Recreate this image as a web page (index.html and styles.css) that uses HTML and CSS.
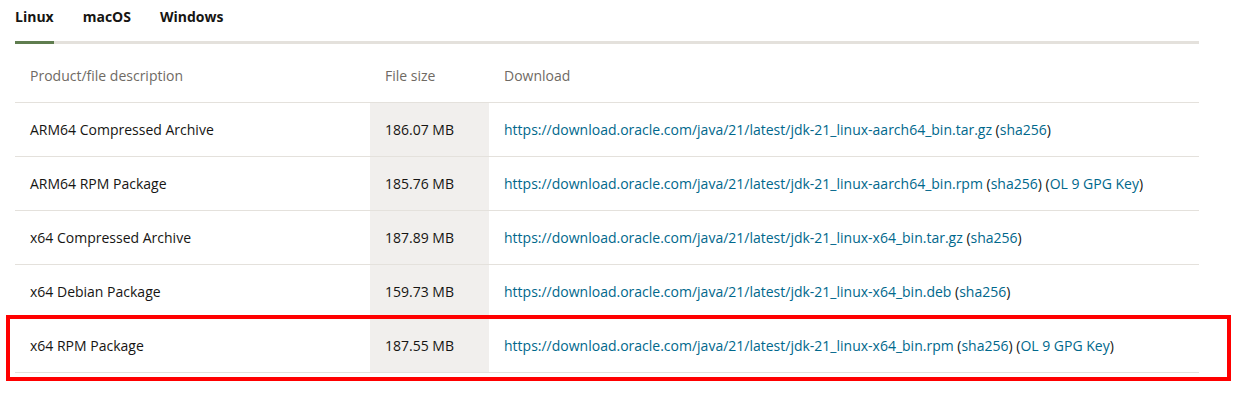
FILE: index.html
```html
<!DOCTYPE html>
<html lang="en">
<head>
<meta charset="utf-8">
<title>JDK 21 downloads</title>
<link rel="stylesheet" href="styles.css">
</head>
<body>
<div class="page">
  <nav class="tabs">
    <a class="tab active">Linux</a>
    <a class="tab">macOS</a>
    <a class="tab">Windows</a>
  </nav>
  <table class="files">
    <thead>
      <tr>
        <th class="c-desc">Product/file description</th>
        <th class="c-size">File size</th>
        <th class="c-dl">Download</th>
      </tr>
    </thead>
    <tbody>
      <tr>
        <td>ARM64 Compressed Archive</td>
        <td class="shade">186.07 MB</td>
        <td><a>https://download.oracle.com/java/21/latest/jdk-21_linux-aarch64_bin.tar.gz</a> (<a>sha256</a>)</td>
      </tr>
      <tr>
        <td>ARM64 RPM Package</td>
        <td class="shade">185.76 MB</td>
        <td><a>https://download.oracle.com/java/21/latest/jdk-21_linux-aarch64_bin.rpm</a> (<a>sha256</a>) (<a>OL 9 GPG Key</a>)</td>
      </tr>
      <tr>
        <td>x64 Compressed Archive</td>
        <td class="shade">187.89 MB</td>
        <td><a>https://download.oracle.com/java/21/latest/jdk-21_linux-x64_bin.tar.gz</a> (<a>sha256</a>)</td>
      </tr>
      <tr>
        <td>x64 Debian Package</td>
        <td class="shade">159.73 MB</td>
        <td><a>https://download.oracle.com/java/21/latest/jdk-21_linux-x64_bin.deb</a> (<a>sha256</a>)</td>
      </tr>
      <tr>
        <td>x64 RPM Package</td>
        <td class="shade">187.55 MB</td>
        <td><a>https://download.oracle.com/java/21/latest/jdk-21_linux-x64_bin.rpm</a> (<a>sha256</a>) (<a>OL 9 GPG Key</a>)</td>
      </tr>
    </tbody>
  </table>
  <div class="highlight"></div>
</div>
</body>
</html>
```
FILE: styles.css
```css
html, body {
  margin: 0;
  padding: 0;
  background: #ffffff;
}
body {
  font-family: "Open Sans", "Noto Sans", sans-serif;
  color: #161513;
  font-size: 14px;
  min-height: 393px;
}
.page {
  position: relative;
  padding: 0 36px 21px 15px;
}
.tabs {
  display: flex;
  gap: 29px;
  height: 41px;
  border-bottom: 3px solid #e4e1dc;
  width: 1184px;
}
.tab {
  display: block;
  font-weight: 700;
  font-size: 14px;
  line-height: 20px;
  padding-top: 7px;
  color: #161513;
  height: 34px;
}
.tab.active {
  border-bottom: 3px solid #5f7d4f;
}
.files {
  border-collapse: collapse;
  width: 1184px;
  table-layout: fixed;
}
.files th {
  text-align: left;
  font-weight: 400;
  color: #6f6a64;
  height: 58px;
  padding: 6px 15px 0 15px;
  box-sizing: border-box;
  border-bottom: 1px solid #e4e1dc;
}
.c-desc { width: 355px; }
.c-size { width: 119px; }
.files td {
  height: 54px;
  padding: 0 15px;
  box-sizing: border-box;
  border-bottom: 1px solid #e4e1dc;
  white-space: nowrap;
}
.files td.shade {
  background: #f1efed;
}
.files a {
  color: #00688c;
  text-decoration: none;
}
.highlight {
  position: absolute;
  left: 6px;
  top: 315px;
  width: 1217px;
  height: 58px;
  border: 4px solid #ff0000;
  pointer-events: none;
}
```
